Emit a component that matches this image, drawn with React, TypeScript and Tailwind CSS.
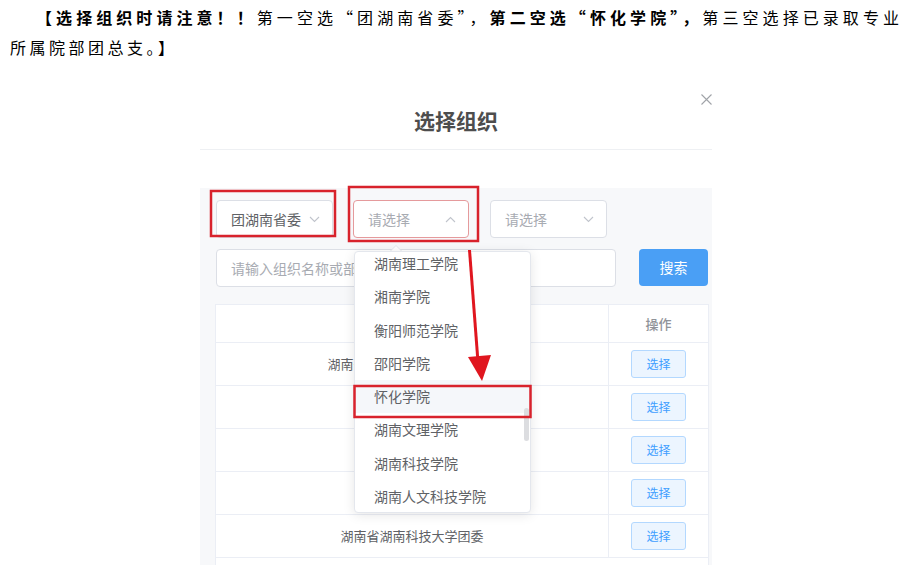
import React from "react";

const Chevron = ({ up = false }: { up?: boolean }) => (
  <svg width="11" height="7" viewBox="0 0 11 7" fill="none">
    <path
      d={up ? "M1 6 L5.5 1.5 L10 6" : "M1 1 L5.5 5.5 L10 1"}
      stroke="#c0c4cc"
      strokeWidth="1.1"
    />
  </svg>
);

const rows = ["湖南省湖南人文科技学院团委", "", "", "", "湖南省湖南科技大学团委"];

const options = [
  "湖南理工学院",
  "湘南学院",
  "衡阳师范学院",
  "邵阳学院",
  "怀化学院",
  "湖南文理学院",
  "湖南科技学院",
  "湖南人文科技学院",
];

export default function App() {
  return (
    <div className="relative w-[911px] h-[565px] overflow-hidden bg-white font-['Noto_Sans_CJK_SC','Liberation_Sans',sans-serif]">
      {/* Instruction paragraph */}
      <div className="pt-[2px] pl-[10px] w-[899px] text-[16px] leading-[30px] text-black">
        <div className="pl-[26px] text-justify [text-align-last:justify]">
          <span className="font-bold">【选择组织时请注意！！</span>
          <span>第一空选“团湖南省委”，</span>
          <span className="font-bold">第二空选“怀化学院”，</span>
          <span>第三空选择已录取专业</span>
        </div>
        <div className="tracking-[3.5px]">所属院部团总支。】</div>
      </div>

      {/* Dialog */}
      <div className="relative ml-[200px] w-[512px]">
        <div className="h-[87px] pt-[44px] text-center text-[21px] leading-[28px] font-bold text-[#4d4d4d]">
          选择组织
        </div>
        <div className="absolute left-[501px] top-[32px]">
          <svg width="11" height="11" viewBox="0 0 11 11">
            <path d="M0.5 0.5 L10.5 10.5 M10.5 0.5 L0.5 10.5" stroke="#a0a3a8" strokeWidth="1.1" />
          </svg>
        </div>
        <div className="h-px bg-[#eef0f3]" />
        <div className="h-[38px]" />

        {/* Panel */}
        <div className="h-[377px] bg-[#f7f8fa] pl-[15px] pt-[12px] pr-[4px]">
          <div className="flex">
            <div className="ml-px w-[117px] h-[38px] mr-[20px] rounded-[4px] border border-[#dcdfe6] bg-white flex items-center justify-between pl-[14px] pr-[12px] text-[14px] text-[#606266]">
              <span>团湖南省委</span>
              <Chevron />
            </div>
            <div className="w-[116px] h-[38px] mr-[21px] rounded-[4px] border border-[#e59a9c] bg-white flex items-center justify-between pl-[14px] pr-[12px] text-[14px] text-[#a8abb2]">
              <span>请选择</span>
              <Chevron up />
            </div>
            <div className="w-[117px] h-[38px] rounded-[4px] border border-[#dcdfe6] bg-white flex items-center justify-between pl-[14px] pr-[12px] text-[14px] text-[#a8abb2]">
              <span>请选择</span>
              <Chevron />
            </div>
          </div>

          <div className="flex mt-[11px]">
            <div className="ml-px w-[401px] h-[38px] rounded-[4px] border border-[#dcdfe6] bg-white flex items-center pl-[14px] text-[14px] text-[#a8abb2]">
              请输入组织名称或部
            </div>
            <div className="ml-[23px] w-[69px] h-[37px] rounded-[4px] bg-[#4a9ff5] flex items-center justify-center text-[14px] text-white">
              搜索
            </div>
          </div>

          {/* Table */}
          <div className="mt-[17px] w-[494px] h-[300px] border border-[#ebeef5] bg-white text-[13px] text-[#606266]">
            <div className="flex h-[37px]">
              <div className="flex-1" />
              <div className="w-[100px] border-l border-[#ebeef5] flex items-center justify-center text-[#909399] font-medium">
                操作
              </div>
            </div>
            {rows.map((r, i) => (
              <div key={i} className="flex h-[43px] border-t border-[#ebeef5]">
                <div className="flex-1 flex items-center justify-center">{r}</div>
                <div className="w-[100px] border-l border-[#ebeef5] flex items-center justify-center">
                  <div className="w-[55px] h-[28px] rounded-[3px] border border-[#b3d8ff] bg-[#ecf5ff] flex items-center justify-center text-[12px] text-[#409eff]">
                    选择
                  </div>
                </div>
              </div>
            ))}
            <div className="border-t border-[#ebeef5]" />
          </div>
        </div>
      </div>

      {/* Dropdown popper */}
      <div className="absolute left-[390px] top-[245px] w-0 h-0 border-l-[6px] border-r-[6px] border-b-[6px] border-l-transparent border-r-transparent border-b-[#e4e7ed]" />
      <div className="absolute left-[391px] top-[246px] w-0 h-0 border-l-[5px] border-r-[5px] border-b-[5px] border-l-transparent border-r-transparent border-b-white" />
      <div className="absolute left-[354px] top-[251px] w-[177px] h-[262px] overflow-hidden rounded-[4px] border border-[#e4e7ed] bg-white shadow-[0_2px_12px_rgba(0,0,0,0.1)]">
        <div className="-mt-[5px]">
          {options.map((o) => (
            <div
              key={o}
              className={`h-[33.3px] leading-[33.3px] pl-[19px] text-[14px] text-[#606266] ${
                o === "怀化学院" ? "bg-[#f5f7fa]" : ""
              }`}
            >
              {o}
            </div>
          ))}
        </div>
        <div className="absolute left-[169px] top-[156px] w-[5px] h-[33px] rounded-[3px] bg-[#dcdde0]" />
      </div>

      {/* Red annotations */}
      <svg className="absolute left-0 top-0 pointer-events-none" width="911" height="565" viewBox="0 0 911 565">
        <rect x="211" y="191" width="124" height="45" fill="none" stroke="#d8222c" strokeWidth="2.5" />
        <rect x="349" y="187" width="129" height="54" fill="none" stroke="#d8222c" strokeWidth="2.5" />
        <rect x="354.5" y="386" width="176" height="31" fill="none" stroke="#d8222c" strokeWidth="2.5" />
        <path d="M469.5 250 L478 362" stroke="#e0161f" strokeWidth="3" />
        <polygon points="468,357 491,355 482,381" fill="#e0161f" />
      </svg>
    </div>
  );
}
